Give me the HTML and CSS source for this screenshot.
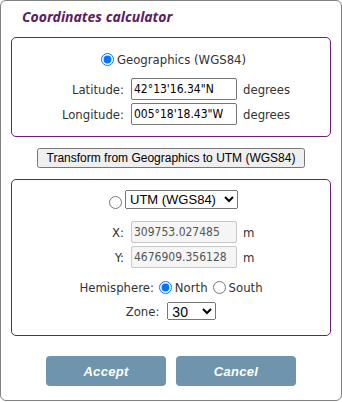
FILE: index.html
```html
<!DOCTYPE html>
<html lang="en">
<head>
    <meta charset="UTF-8">
    <meta name="viewport" content="width=device-width, initial-scale=1.0">
    <title>Coordinates calculator</title>
    <link rel="stylesheet" href="styles.css">
</head>
<body>
    <div class="dialog">
        <h1 class="title">Coordinates calculator</h1>

        <div class="group group-geo">
            <div class="choice">
                <input type="radio" id="sys-geo" name="system" checked>
                <label for="sys-geo">Geographics (WGS84)</label>
            </div>
            <div class="rows">
                <label for="lat">Latitude:</label>
                <input type="text" id="lat" class="field" value="42°13'16.34&quot;N">
                <span class="unit">degrees</span>
                <label for="lon">Longitude:</label>
                <input type="text" id="lon" class="field" value="005°18'18.43&quot;W">
                <span class="unit">degrees</span>
            </div>
        </div>

        <div class="transform">
            <button type="button" class="btn-transform">Transform from Geographics to UTM (WGS84)</button>
        </div>

        <div class="group group-utm">
            <div class="choice">
                <input type="radio" id="sys-utm" name="system">
                <select class="sel-system">
                    <option>UTM (WGS84)</option>
                    <option>UTM (ED50)</option>
                </select>
            </div>
            <div class="rows">
                <label for="utm-x">X:</label>
                <input type="text" id="utm-x" class="field" value="309753.027485" readonly>
                <span class="unit">m</span>
                <label for="utm-y">Y:</label>
                <input type="text" id="utm-y" class="field" value="4676909.356128" readonly>
                <span class="unit">m</span>
            </div>
            <div class="line line-hemi">
                <span>Hemisphere:</span>
                <input type="radio" id="hemi-n" name="hemi" checked>
                <label for="hemi-n">North</label>
                <input type="radio" id="hemi-s" name="hemi">
                <label for="hemi-s">South</label>
            </div>
            <div class="line line-zone">
                <label for="zone">Zone:</label>
                <select id="zone" class="sel-zone">
                    <option>29</option>
                    <option selected>30</option>
                    <option>31</option>
                </select>
            </div>
        </div>

        <div class="actions">
            <button type="button" class="btn">Accept</button>
            <button type="button" class="btn">Cancel</button>
        </div>
    </div>
</body>
</html>
```

FILE: styles.css
```css
body {
    margin: 0;
    padding: 0;
    font-family: 'DejaVu Sans Condensed', 'DejaVu Sans', sans-serif;
    font-stretch: condensed;
    font-size: 13px;
    color: #333333;
    background-color: #ffffff;
}
.dialog {
    width: 342px;
    height: 401px;
    box-sizing: border-box;
    border: 1px solid #808080;
    border-radius: 6px;
    background-color: #ffffff;
}
.title {
    margin: 0;
    padding: 6px 0 0 21px;
    height: 30px;
    line-height: 20px;
    font-family: 'Noto Sans', sans-serif;
    font-stretch: normal;
    font-size: 14px;
    font-weight: bold;
    font-style: italic;
    color: #5c1d61;
}
.group {
    margin: 0 10px;
    border: 1px solid #6e1f74;
    border-radius: 5px;
}
.group-geo {
    height: 100px;
    box-sizing: border-box;
    padding-top: 11px;
}
.group-utm {
    height: 157px;
    box-sizing: border-box;
    padding-top: 10px;
}
.choice {
    display: flex;
    justify-content: center;
    align-items: center;
    height: 20px;
}
.group-utm .choice {
    height: 19px;
    align-items: flex-end;
}
.choice input[type="radio"] {
    margin: 0 3px 0 5px;
}
.group-geo .rows {
    margin-top: 9px;
}
.group-utm .rows {
    margin-top: 12px;
}
.rows {
    display: grid;
    grid-template-columns: 112px 106px auto;
    column-gap: 7px;
    row-gap: 3px;
    align-items: center;
}
.rows label {
    text-align: right;
}
.unit {
    margin-left: -1px;
}
.field {
    width: 106px;
    height: 22px;
    box-sizing: border-box;
    padding: 0 2px;
    border: 1px solid #767676;
    border-radius: 2px;
    font-family: 'DejaVu Sans Condensed', 'DejaVu Sans', sans-serif;
    font-stretch: condensed;
    font-size: 12px;
    color: #000000;
}
.field[readonly] {
    background-color: #f5f5f5;
    border-color: #c8c8c8;
    color: #555555;
}
.line {
    display: flex;
    justify-content: center;
    align-items: center;
}
.line-hemi {
    margin-top: 9px;
    height: 20px;
}
.line-hemi input[type="radio"] {
    margin: 0 3px 0 5px;
}
.line-zone {
    margin-top: 5px;
    height: 18px;
    gap: 8px;
}
.sel-system {
    width: 113px;
    height: 19px;
    font-family: 'Liberation Sans', Arial, sans-serif;
    font-stretch: normal;
    font-size: 13px;
    color: #000000;
}
.sel-zone {
    width: 49px;
    height: 18px;
    font-family: 'Liberation Sans', Arial, sans-serif;
    font-stretch: normal;
    font-size: 14px;
    color: #000000;
}
.transform {
    display: flex;
    justify-content: center;
    margin: 11px 0;
}
.btn-transform {
    height: 20px;
    padding: 0 8px;
    font-family: 'Liberation Sans', Arial, sans-serif;
    font-stretch: normal;
    font-size: 12px;
    color: #000000;
}
.actions {
    display: flex;
    justify-content: center;
    gap: 10px;
    margin-top: 20px;
}
.btn {
    width: 120px;
    height: 30px;
    border: none;
    border-radius: 4px;
    background-color: #6f94ad;
    color: #ffffff;
    font-family: 'Liberation Sans', Arial, sans-serif;
    font-stretch: normal;
    font-size: 13px;
    font-weight: bold;
    font-style: italic;
    letter-spacing: 0.3px;
    cursor: pointer;
}
.btn:hover {
    background-color: #5c8099;
}
```
